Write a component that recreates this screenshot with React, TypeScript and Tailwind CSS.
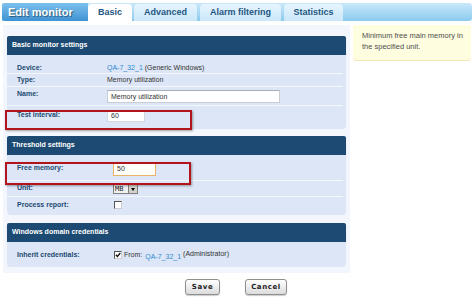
import React from "react";

const font = "font-['Liberation_Sans',Arial,sans-serif]";

function Tab({ label, active }: { label: string; active?: boolean }) {
  return (
    <div
      className={`h-[17px] mt-[1px] rounded-t-[4px] flex items-center justify-center text-[9px] font-bold text-[#1f5683] ${
        active ? "bg-white" : "bg-gradient-to-b from-[#e6f5fe] to-[#cae7f9]"
      }`}
    >
      {label}
    </div>
  );
}

function SectionHeader({ title }: { title: string }) {
  return (
    <div className="h-[19px] bg-[#1c4a72] rounded-t-[2px] flex items-center pl-[5px] text-[7px] font-bold text-white shadow-[0_1px_1px_rgba(0,0,0,0.25)]">
      {title}
    </div>
  );
}

function Row({
  label,
  children,
  h,
  pt,
  valueX = 107,
  line = true,
}: {
  label: string;
  children?: React.ReactNode;
  h: string;
  pt: string;
  valueX?: number;
  line?: boolean;
}) {
  return (
    <div className={`flex ${h} ${pt} ${line ? "border-b border-[#f4f7fd]" : ""}`}>
      <div
        className="shrink-0 pl-[10px] text-[7px] font-bold text-[#1c4a72] leading-[10px]"
        style={{ width: valueX - 7 }}
      >
        {label}
      </div>
      <div className="flex-1 text-[7px] text-[#333] leading-[10px]">{children}</div>
    </div>
  );
}

export default function App() {
  return (
    <div className={`relative w-[474px] h-[305px] bg-white ${font}`}>
      {/* header bar */}
      <div className="flex mt-[3px] mx-[2px] h-[18px] w-[470px] bg-gradient-to-b from-[#c9e8fb] to-[#8ccaee] rounded-r-[3px]">
        <div className="w-[86px] h-[18px] rounded-l-[3px] bg-gradient-to-b from-[#7cc0ec] to-[#3e92d4] flex items-center pl-[6px] text-[11px] font-bold text-white [text-shadow:1px_1px_1px_rgba(0,0,0,0.45)]">
          Edit monitor
        </div>
        <div className="w-[44px]">
          <Tab label="Basic" active />
        </div>
        <div className="w-[63px] ml-[2px]">
          <Tab label="Advanced" />
        </div>
        <div className="w-[81px] ml-[3px]">
          <Tab label="Alarm filtering" />
        </div>
        <div className="w-[59px] ml-[3px]">
          <Tab label="Statistics" />
        </div>
      </div>

      <div className="flex mt-[4px]">
        {/* left panel */}
        <div className="ml-[3px] w-[347px] h-[248px] bg-[#f4f6fd] px-[4px] pt-[11px]">
          {/* Basic monitor settings */}
          <SectionHeader title="Basic monitor settings" />
          <div className="bg-[#dde6f6] rounded-b-[4px] h-[74px] pr-[3px]">
            <Row label="Device:" h="h-[19px]" pt="pt-[8px]">
              <span className="text-[#2f8ad3]">QA-7_32_1</span> (Generic Windows)
            </Row>
            <Row label="Type:" h="h-[13px]" pt="pt-[1px]">
              Memory utilization
            </Row>
            <Row label="Name:" h="h-[19px]" pt="pt-[2px]">
              <div className="mt-[1px] w-[173px] h-[13px] bg-white border border-[#c9ccd2] border-t-[#a9adb5] pl-[3px] leading-[11px]">
                Memory utilization
              </div>
            </Row>
            <Row label="Test interval:" h="h-[20px]" pt="pt-[4px]" line={false}>
              <div className="w-[38px] h-[12px] bg-white border border-[#d4d7dc] pl-[3px] leading-[10px]">
                60
              </div>
            </Row>
          </div>

          {/* Threshold settings */}
          <div className="mt-[7px]">
            <SectionHeader title="Threshold settings" />
          </div>
          <div className="bg-[#dde6f6] rounded-b-[4px] h-[60px] pr-[3px]">
            <Row label="Free memory:" h="h-[26px]" pt="pt-[8px]" valueX={113}>
              <div className="-mt-[1px] w-[43px] h-[14px] bg-[#fffef8] border border-[#e9b36a] pl-[3px] leading-[12px]">
                50
              </div>
            </Row>
            <Row label="Unit:" h="h-[16px]" pt="pt-[2px]" valueX={113}>
              <div className="mt-[1px] flex w-[25px] h-[10px] border border-[#808080] bg-[#f0f0f0]">
                <div className="flex-1 text-[7px] leading-[8px] font-['DejaVu_Sans_Mono',monospace] pl-[1px] text-[#222]">
                  MB
                </div>
                <div className="w-[9px] h-[8px] bg-[#d4d0c8] border-l border-[#808080] flex items-center justify-center">
                  <div className="w-0 h-0 border-l-[2.5px] border-r-[2.5px] border-t-[3px] border-l-transparent border-r-transparent border-t-black" />
                </div>
              </div>
            </Row>
            <Row label="Process report:" h="h-[17px]" pt="pt-[3px]" valueX={113} line={false}>
              <div className="ml-[1px] mt-[1px] w-[8px] h-[8px] bg-white border border-[#555] border-r-[#ccc] border-b-[#ccc]" />
            </Row>
          </div>

          {/* Windows domain credentials */}
          <div className="mt-[8px]">
            <SectionHeader title="Windows domain credentials" />
          </div>
          <div className="bg-[#dde6f6] rounded-b-[4px] h-[25px] pr-[3px]">
            <Row label="Inherit credentials:" h="h-[25px]" pt="pt-[8px]" valueX={113} line={false}>
              <div className="flex items-start">
                <div className="ml-[1px] mt-[1px] w-[8px] h-[8px] bg-white border border-[#555] border-r-[#ccc] border-b-[#ccc] flex items-center justify-center">
                  <svg width="6" height="6" viewBox="0 0 6 6">
                    <path d="M0.8 2.8 L2.4 4.5 L5.3 1" stroke="#111" strokeWidth="1.3" fill="none" />
                  </svg>
                </div>
                <span className="ml-[2px]">From:</span>
                <span className="ml-[3px] mt-[2px] text-[#2f8ad3]">QA-7_32_1</span>
                <span className="ml-[2px] -mt-[1px]">(Administrator)</span>
              </div>
            </Row>
          </div>
        </div>

        {/* tip */}
        <div className="ml-[3px] w-[118px] h-[36px] bg-[#fefddf] border-b border-[#f0eab6] rounded-[3px] pl-[9px] pt-[5px] text-[7.5px] leading-[11px] text-[#4f4f4f]">
          Minimum free main memory in
          <br />
          the specified unit.
        </div>
      </div>

      {/* buttons */}
      <div className="flex mt-[6px] ml-[185px] gap-[25px]">
        <button className="w-[35px] h-[16px] rounded-[3px] border border-[#8f8f8f] bg-gradient-to-b from-white to-[#dcdcdc] text-[7px] font-bold text-[#222] tracking-[0.6px] font-['DejaVu_Sans',sans-serif] shadow-[0_1px_1px_rgba(0,0,0,0.2)]">
          Save
        </button>
        <button className="w-[42px] h-[16px] rounded-[3px] border border-[#8f8f8f] bg-gradient-to-b from-white to-[#dcdcdc] text-[7px] font-bold text-[#222] tracking-[0.6px] font-['DejaVu_Sans',sans-serif] shadow-[0_1px_1px_rgba(0,0,0,0.2)]">
          Cancel
        </button>
      </div>

      {/* annotation highlights */}
      <div className="absolute left-[5px] top-[107px] w-[187px] h-[20px] border-2 border-[#b3141c] shadow-[1px_1px_2px_rgba(0,0,0,0.35)]" />
      <div className="absolute left-[5px] top-[159px] w-[186px] h-[23px] border-2 border-[#b3141c] shadow-[1px_1px_2px_rgba(0,0,0,0.35)]" />
    </div>
  );
}
